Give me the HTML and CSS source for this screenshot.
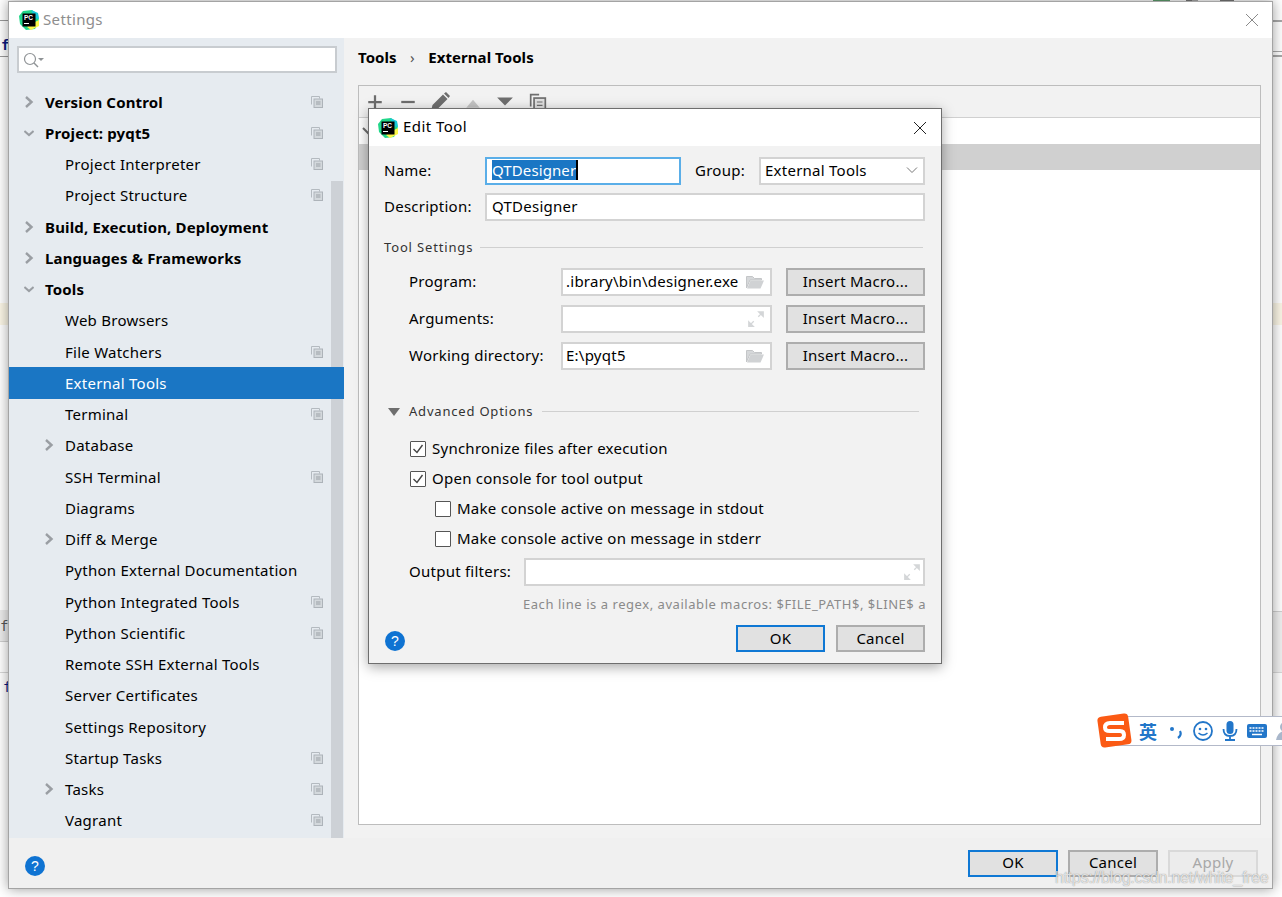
FILE: index.html
```html
<!DOCTYPE html>
<html lang="en">
<head>
<meta charset="utf-8">
<title>Settings</title>
<link rel="stylesheet" href="styles.css">
</head>
<body>
<svg class="defs" width="0" height="0" aria-hidden="true">
  <symbol id="pc" viewBox="0 0 20 20">
    <path d="M4 1 L13 0 L19 4 L20 12 L16 19 L7 20 L1 14 L0 6Z" fill="#21d789"/>
    <path d="M12 0 L19 3 L20 9 L15 8Z" fill="#19c8d8"/>
    <path d="M20 10 L20 16 L12 20 L8 17 L16 12Z" fill="#fcf84a"/>
    <rect x="3.5" y="3.5" width="13" height="13" fill="#000"/>
    <rect x="5" y="13" width="5" height="1" fill="#fff"/>
  </symbol>
  <symbol id="copy" viewBox="0 0 12 12">
    <path d="M.5 8.5V.5h8v2" fill="none" stroke="#b4bac0"/>
    <rect x="3" y="3" width="8.5" height="8.5" fill="#d3d8dc" stroke="#adb3b9"/>
    <path d="M5 6h4.5M5 8h4.5" stroke="#9aa0a6"/>
  </symbol>
  <symbol id="right" viewBox="0 0 10 12">
    <path d="M2 1 L7.500 6 L2 11" fill="none" stroke="#9a9ea3" stroke-width="2.400"/>
  </symbol>
  <symbol id="down" viewBox="0 0 12 12">
    <path d="M.5 3.500 L6 8.500 L11.500 3.500" fill="none" stroke="#9a9ea3" stroke-width="2.400"/>
  </symbol>
  <symbol id="folder" viewBox="0 0 18 14">
    <path d="M.5 13V1.500h6l2 2h7V5H4L.5 13" fill="#d6d8da" stroke="#c4c6c8"/>
    <path d="M1 13.500 L4.500 5.500H18L14.500 13.500Z" fill="#d0d2d4"/>
  </symbol>
  <symbol id="expand" viewBox="0 0 16 16">
    <path d="M9 1h6v6ZM7 15H1V9Z" fill="#d4d6d8"/>
    <path d="M13 3 L10 6M3 13 L6 10" stroke="#d4d6d8" stroke-width="1.200"/>
  </symbol>
  <symbol id="check" viewBox="0 0 14 14">
    <path d="M2.500 7 L6 10.500 L11.500 3" fill="none" stroke="#444" stroke-width="1.400"/>
  </symbol>
</svg>

<div class="bg-strip bg-top"></div>
<div class="bg-strip bg-line-a"></div>
<div class="bg-strip bg-line-b"></div>
<div class="bg-strip bg-yellow"></div>
<div class="bg-strip bg-tab"></div>
<div class="bg-strip bg-line-c"></div>
<div class="bg-strip bg-right-a"></div>
<div class="bg-strip bg-right-b"></div>
<div class="bg-strip bg-right-c"></div>
<div class="bg-strip bg-yellow-r"></div>
<div class="bg-strip bg-tab-r"></div>
<span class="bg-code code-a">f</span>
<span class="bg-code code-b">f</span>
<span class="bg-code code-c">f</span>

<main class="settings">
  <header class="titlebar">
    <svg class="logo" viewBox="0 0 20 20"><use href="#pc"/><text class="pc-text" x="5" y="10">PC</text></svg>
    <span class="win-title">Settings</span>
    <svg class="close close-muted" viewBox="0 0 14 14"><path d="M1 1 L13 13M13 1 L1 13"/></svg>
  </header>
  <div class="split">
    <aside class="sidebar">
      <div class="search">
        <svg class="search-icon" viewBox="0 0 22 16"><circle cx="7" cy="7" r="5.500" fill="none" stroke="#8f9396" stroke-width="1.200"/><path d="M11 11 L15 15" stroke="#8f9396" stroke-width="1.400"/><path d="M15 6h6l-3 3Z" fill="#8f9396"/></svg>
      </div>
      <div class="scroll-thumb"></div>
      <nav class="tree">
        <div class="row top"><svg class="arrow"><use href="#right"/></svg><span>Version Control</span><svg class="copy"><use href="#copy"/></svg></div>
        <div class="row top"><svg class="arrow"><use href="#down"/></svg><span>Project: pyqt5</span><svg class="copy"><use href="#copy"/></svg></div>
        <div class="row"><i class="slot"></i><span>Project Interpreter</span><svg class="copy"><use href="#copy"/></svg></div>
        <div class="row"><i class="slot"></i><span>Project Structure</span><svg class="copy"><use href="#copy"/></svg></div>
        <div class="row top"><svg class="arrow"><use href="#right"/></svg><span>Build, Execution, Deployment</span></div>
        <div class="row top"><svg class="arrow"><use href="#right"/></svg><span>Languages &amp; Frameworks</span></div>
        <div class="row top"><svg class="arrow"><use href="#down"/></svg><span>Tools</span></div>
        <div class="row"><i class="slot"></i><span>Web Browsers</span></div>
        <div class="row"><i class="slot"></i><span>File Watchers</span><svg class="copy"><use href="#copy"/></svg></div>
        <div class="row selected"><i class="slot"></i><span>External Tools</span></div>
        <div class="row"><i class="slot"></i><span>Terminal</span><svg class="copy"><use href="#copy"/></svg></div>
        <div class="row"><svg class="arrow"><use href="#right"/></svg><span>Database</span></div>
        <div class="row"><i class="slot"></i><span>SSH Terminal</span><svg class="copy"><use href="#copy"/></svg></div>
        <div class="row"><i class="slot"></i><span>Diagrams</span></div>
        <div class="row"><svg class="arrow"><use href="#right"/></svg><span>Diff &amp; Merge</span></div>
        <div class="row"><i class="slot"></i><span>Python External Documentation</span></div>
        <div class="row"><i class="slot"></i><span>Python Integrated Tools</span><svg class="copy"><use href="#copy"/></svg></div>
        <div class="row"><i class="slot"></i><span>Python Scientific</span><svg class="copy"><use href="#copy"/></svg></div>
        <div class="row"><i class="slot"></i><span>Remote SSH External Tools</span></div>
        <div class="row"><i class="slot"></i><span>Server Certificates</span></div>
        <div class="row"><i class="slot"></i><span>Settings Repository</span></div>
        <div class="row"><i class="slot"></i><span>Startup Tasks</span><svg class="copy"><use href="#copy"/></svg></div>
        <div class="row"><svg class="arrow"><use href="#right"/></svg><span>Tasks</span><svg class="copy"><use href="#copy"/></svg></div>
        <div class="row"><i class="slot"></i><span>Vagrant</span><svg class="copy"><use href="#copy"/></svg></div>
      </nav>
    </aside>
    <section class="content">
      <div class="crumbs"><b>Tools</b><span class="crumb-sep">›</span><b>External Tools</b></div>
      <div class="panel">
        <div class="toolbar">
          <svg class="tool" viewBox="0 0 16 16"><path d="M8 2v12M2 8h12" stroke="#6e6e6e" stroke-width="2"/></svg>
          <svg class="tool" viewBox="0 0 16 16"><path d="M2 8h12" stroke="#6e6e6e" stroke-width="2"/></svg>
          <svg class="tool tool-pen" viewBox="0 0 20 20"><path d="M1 19 L2.500 13 L13 2.500 L17.500 7 L7 17.500Z M14 1.500 L16 0 L20 4 L18.500 6Z" fill="#6e6e6e"/></svg>
          <svg class="tool" viewBox="0 0 16 16"><path d="M2 13h12L8 6Z" fill="#c4c4c4"/></svg>
          <svg class="tool" viewBox="0 0 16 16"><path d="M1 4h14L8 11Z" fill="#6e6e6e"/></svg>
          <svg class="tool" viewBox="0 0 16 16"><path d="M1.500 12V1.500H9" fill="none" stroke="#6e6e6e" stroke-width="1.500"/><rect x="4.500" y="4.500" width="10" height="11" fill="#e0e0e0" stroke="#6e6e6e" stroke-width="1.500"/><path d="M7 8h5M7 11h5" stroke="#6e6e6e"/></svg>
        </div>
        <div class="list">
          <div class="list-group"><svg class="list-arrow" viewBox="0 0 12 10"><path d="M1 2 L6 7 L11 2" fill="none" stroke="#6e6e6e" stroke-width="2"/></svg></div>
          <div class="list-selected"></div>
        </div>
      </div>
    </section>
  </div>
  <footer class="footer">
    <svg class="help" viewBox="0 0 20 20"><circle cx="10" cy="10" r="10"/><text x="10" y="15">?</text></svg>
    <div class="actions">
      <span class="btn btn-default">OK</span>
      <span class="btn">Cancel</span>
      <span class="btn btn-disabled">Apply</span>
    </div>
  </footer>
</main>

<div class="watermark">https://blog.csdn.net/white_free</div>

<div class="ime">
  <svg class="ime-logo" viewBox="0 0 36 36"><rect x="2" y="2" width="31" height="31" rx="4" transform="rotate(-8 18 18)" fill="#fb5a14"/><path d="M27 10 H13 Q8 10 8 14.500 Q8 18 13 18 H23 Q27 18 27 22 Q27 26 22 26 H9" fill="none" stroke="#fff" stroke-width="4"/></svg>
  <span class="ime-zh">英</span>
  <svg class="ime-punct" viewBox="0 0 16 16"><circle cx="4" cy="6" r="2" fill="#2276c9"/><path d="M12 8q2 4-2 7" fill="none" stroke="#2276c9" stroke-width="2.200"/></svg>
  <svg class="ime-icon ime-smile" viewBox="0 0 20 20"><circle cx="10" cy="10" r="9" fill="none" stroke="#2276c9" stroke-width="1.800"/><circle cx="7" cy="8" r="1.300" fill="#2276c9"/><circle cx="13" cy="8" r="1.300" fill="#2276c9"/><path d="M5.500 12q4.500 4 9 0" fill="none" stroke="#2276c9" stroke-width="1.500"/></svg>
  <svg class="ime-icon" viewBox="0 0 20 20"><rect x="6.500" y="0" width="7" height="13" rx="3.500" fill="#2276c9"/><path d="M3.500 8q0 7 6.500 7t6.500-7M10 15v3M5 19h10" fill="none" stroke="#2276c9" stroke-width="1.800"/></svg>
  <svg class="ime-icon" viewBox="0 0 20 16"><rect x="0" y="1" width="20" height="14" rx="2" fill="#2276c9"/><path d="M2.500 5h15M2.500 8h15" stroke="#fff" stroke-width="1.500" stroke-dasharray="2 1"/><path d="M5 11.500h10" stroke="#fff" stroke-width="1.500"/></svg>
  <svg class="ime-icon ime-person" viewBox="0 0 20 20"><circle cx="10" cy="6" r="5" fill="#a9b7cb"/><path d="M1 19q2-9 9-9t9 9Z" fill="#a9b7cb"/></svg>
</div>

<div class="dialog">
  <header class="dlg-title">
    <svg class="logo dlg-logo" viewBox="0 0 20 20"><use href="#pc"/><text class="pc-text" x="5" y="10">PC</text></svg>
    <span class="dlg-name">Edit Tool</span>
    <svg class="close" viewBox="0 0 14 14"><path d="M1 1 L13 13M13 1 L1 13"/></svg>
  </header>
  <div class="dlg-body">
    <div class="f-row f-name">
      <label class="lbl lbl-name">Name:</label>
      <div class="input input-focus"><span class="selection">QTDesigner</span><i class="caret"></i></div>
      <label class="lbl lbl-group">Group:</label>
      <div class="input select"><span>External Tools</span><svg class="select-arrow" viewBox="0 0 12 8"><path d="M1 1.500 L6 6.500 L11 1.500" fill="none" stroke="#777"/></svg></div>
    </div>
    <div class="f-row f-desc">
      <label class="lbl lbl-name">Description:</label>
      <div class="input grow"><span>QTDesigner</span></div>
    </div>
    <div class="sep sep-tool"><span>Tool Settings</span><i></i></div>
    <div class="macro-row">
      <label class="lbl lbl-macro">Program:</label>
      <div class="input input-macro"><span class="clip">.ibrary\bin\designer.exe</span><svg class="field-icon" viewBox="0 0 18 14"><use href="#folder"/></svg></div>
      <span class="btn btn-macro">Insert Macro...</span>
    </div>
    <div class="macro-row">
      <label class="lbl lbl-macro">Arguments:</label>
      <div class="input input-macro"><span class="clip"></span><svg class="field-icon field-exp" viewBox="0 0 16 16"><use href="#expand"/></svg></div>
      <span class="btn btn-macro">Insert Macro...</span>
    </div>
    <div class="macro-row">
      <label class="lbl lbl-macro">Working directory:</label>
      <div class="input input-macro"><span class="clip">E:\pyqt5</span><svg class="field-icon" viewBox="0 0 18 14"><use href="#folder"/></svg></div>
      <span class="btn btn-macro">Insert Macro...</span>
    </div>
    <div class="sep sep-adv"><svg class="adv-arrow" viewBox="0 0 12 8"><path d="M0 0h12L6 8Z" fill="#6e6e6e"/></svg><span>Advanced Options</span><i></i></div>
    <div class="cb-row"><span class="cb"><svg viewBox="0 0 14 14"><use href="#check"/></svg></span><span>Synchronize files after execution</span></div>
    <div class="cb-row"><span class="cb"><svg viewBox="0 0 14 14"><use href="#check"/></svg></span><span>Open console for tool output</span></div>
    <div class="cb-row cb-sub"><span class="cb"></span><span>Make console active on message in stdout</span></div>
    <div class="cb-row cb-sub"><span class="cb"></span><span>Make console active on message in stderr</span></div>
    <div class="f-row f-out">
      <label class="lbl lbl-out">Output filters:</label>
      <div class="input grow"><svg class="field-icon field-exp end" viewBox="0 0 16 16"><use href="#expand"/></svg></div>
    </div>
    <div class="hint">Each line is a regex, available macros: $FILE_PATH$, $LINE$ a</div>
    <div class="dlg-foot">
      <svg class="help dlg-help" viewBox="0 0 20 20"><circle cx="10" cy="10" r="10"/><text x="10" y="15">?</text></svg>
      <span class="btn btn-default dlg-btn">OK</span>
      <span class="btn dlg-btn">Cancel</span>
    </div>
  </div>
</div>
</body>
</html>
```

FILE: styles.css
```css
* { box-sizing: border-box; }
html, body { margin: 0; height: 100%; }
body {
  position: relative;
  width: 1282px;
  height: 897px;
  overflow: hidden;
  background: #fff;
  font-family: "Noto Sans", "Liberation Sans", sans-serif;
  font-size: 15px;
  letter-spacing: .25px;
  color: #000;
}
.defs { position: absolute; }

/* things visible behind the windows */
.bg-strip { position: absolute; }
.bg-top {
  left: 1040px;
  top: 0;
  width: 200px;
  height: 1px;
  background: linear-gradient(90deg, transparent 0 113px, #5fa06f 113px 130px, transparent 130px 146px, #777 146px 152px, #aaa 152px 158px, transparent 158px 180px, #777 180px 194px, transparent 194px);
}
.bg-line-a { left: 0; top: 20px; width: 9px; height: 1px; background: #9a9a9a; }
.bg-line-b { left: 0; top: 56px; width: 9px; height: 1px; background: #9a9a9a; }
.bg-yellow { left: 0; top: 303px; width: 9px; height: 22px; background: #fbf6e6; }
.bg-tab { left: 0; top: 610px; width: 9px; height: 32px; background: #ececec; border-bottom: 1px solid #cfcfcf; }
.bg-line-c { left: 0; top: 672px; width: 9px; height: 1px; background: #d8d8d8; }
.bg-right-a { left: 1273px; top: 20px; width: 9px; height: 2px; background: #a8a8a8; }
.bg-right-b { left: 1273px; top: 51px; width: 9px; height: 1px; background: #a8a8a8; }
.bg-right-c { left: 1273px; top: 55px; width: 9px; height: 2px; background: #a8a8a8; }
.bg-yellow-r { left: 1273px; top: 303px; width: 9px; height: 22px; background: #fbf6e6; }
.bg-tab-r { left: 1273px; top: 611px; width: 9px; height: 62px; background: #f0f0f0; border-top: 1px solid #d0d0d0; border-bottom: 1px solid #d8d8d8; }
.bg-code { position: absolute; left: 1px; font-family: "DejaVu Sans Mono", monospace; font-size: 14px; line-height: 16px; letter-spacing: 0; }
.code-a { top: 37px; left: 1px; color: #0a1a80; font-weight: 700; }
.code-b { top: 618px; left: 0; color: #555; }
.code-c { top: 679px; left: 3px; color: #0a1a80; }

/* settings window */
.settings {
  position: absolute;
  left: 8px;
  top: 1px;
  width: 1265px;
  height: 888px;
  display: flex;
  flex-direction: column;
  background: #f2f2f2;
  border: 1px solid #a4a4a4;
  box-shadow: 0 0 12px rgba(0, 0, 0, .4);
}
.titlebar {
  flex: none;
  height: 36px;
  display: flex;
  align-items: center;
  padding: 0 13px 0 10px;
  background: #fff;
}
.logo { width: 20px; height: 20px; flex: none; }
.pc-text { font: 700 6.500px "Liberation Sans", sans-serif; letter-spacing: 0; fill: #fff; }
.win-title { margin-left: 4px; padding-bottom: 2px; color: #8e8e8e; letter-spacing: .35px; }
.close { width: 14px; height: 14px; margin-left: auto; }
.close path { fill: none; stroke: #222; stroke-width: 1; }
.close-muted path { stroke: #8a8a8a; }

.split { flex: 1; display: flex; min-height: 0; }
.sidebar {
  position: relative;
  flex: none;
  width: 335px;
  background: #e6ebf0;
  padding: 8px 0 0;
}
.search {
  height: 27px;
  margin: 0 7px 0 8px;
  background: #fff;
  border: 2px solid #c8ccd0;
  display: flex;
  align-items: center;
  padding-left: 4px;
}
.search-icon { width: 22px; height: 16px; }
.scroll-thumb {
  position: absolute;
  right: 1px;
  top: 143px;
  bottom: 0;
  width: 12px;
  background: #cdd1d6;
}
.tree { margin-top: 13px; }
.row {
  position: relative;
  height: 31.25px;
  display: flex;
  align-items: center;
  padding-left: 34px;
  white-space: nowrap;
}
.row.top { padding-left: 14px; font-weight: 700; letter-spacing: .15px; }
.slot { width: 22px; flex: none; }
.arrow { width: 10px; height: 12px; flex: none; margin-left: 1px; margin-right: 11px; }
.copy { width: 12px; height: 12px; margin-left: auto; margin-right: 21px; flex: none; }
.selected { background: #1a76c4; color: #fff; z-index: 1; }

.content { flex: 1; min-width: 0; padding: 0 11px 13px 14px; display: flex; flex-direction: column; }
.crumbs { height: 47px; flex: none; display: flex; align-items: center; padding-bottom: 9px; letter-spacing: .05px; }
.crumbs b { font-weight: 700; }
.crumb-sep { margin: 0 13.500px; color: #555; }
.panel { flex: 1; display: flex; flex-direction: column; border: 1px solid #bdbdbd; }
.toolbar {
  height: 32px;
  flex: none;
  display: flex;
  align-items: center;
  gap: 14.600px;
  padding: 0 7px;
  border-bottom: 1px solid #d0d0d0;
  background: #f2f2f2;
}
.tool { width: 18px; height: 18px; flex: none; }
.tool-pen { width: 20px; height: 20px; margin: 0 -1px; }
.list { flex: 1; background: #fff; }
.list-group { height: 26px; padding: 8px 0 0 3px; }
.list-arrow { display: block; width: 12px; height: 10px; }
.list-selected { height: 26px; background: #d0d0d0; }

.footer {
  flex: none;
  height: 50px;
  display: flex;
  align-items: center;
  justify-content: space-between;
  padding: 0 14px 0 16px;
  background: #f0f0f0;
}
.help { width: 20px; height: 20px; flex: none; margin-top: 6px; }
.help circle { fill: #0f73d2; }
.help text { font: 14px "Liberation Sans", sans-serif; letter-spacing: 0; fill: #fff; text-anchor: middle; }
.actions { display: flex; gap: 10px; }
.btn {
  width: 90px;
  height: 27px;
  padding-bottom: 2px;
  display: flex;
  align-items: center;
  justify-content: center;
  background: #e1e1e1;
  border: 2px solid #adadad;
  white-space: nowrap;
}
.btn-default { border-color: #0f78d4; }
.btn-disabled { border-color: #d9d9d9; background: #ececec; color: #a8a8a8; }

.watermark {
  position: absolute;
  left: 1055px;
  top: 868px;
  font-family: "Liberation Sans", sans-serif;
  font-size: 16px;
  letter-spacing: -.25px;
  line-height: 20px;
  color: rgba(255, 255, 255, .75);
  text-shadow: 0 0 1px rgba(90, 90, 90, .8);
}

.ime {
  position: absolute;
  left: 1097px;
  top: 713px;
  width: 185px;
  height: 36px;
  display: flex;
  align-items: center;
}
.ime::before {
  content: "";
  position: absolute;
  left: 15px;
  right: 0;
  top: 3px;
  bottom: 3px;
  background: #fff;
  border: 1px solid #b3b9c9;
  border-right: 0;
}
.ime > * { position: relative; flex: none; }
.ime-logo { width: 36px; height: 36px; }
.ime-zh {
  margin-left: 6px;
  color: #2276c9;
  font-family: "Noto Sans CJK SC", sans-serif;
  font-size: 18px;
  font-weight: 700;
  line-height: 20px;
  letter-spacing: 0;
}
.ime-punct { width: 16px; height: 16px; margin-left: 11px; }
.ime-icon { width: 20px; height: 20px; margin-left: 7px; }
.ime-smile { margin-left: 9px; }
.ime-person { margin-left: 8px; }

/* dialog */
.dialog {
  position: absolute;
  left: 368px;
  top: 108px;
  width: 574px;
  height: 556px;
  display: flex;
  flex-direction: column;
  border: 1px solid #6e6e6e;
  background: #f2f2f2;
  box-shadow: 0 3px 12px rgba(0, 0, 0, .35);
}
.dlg-title {
  flex: none;
  height: 37px;
  display: flex;
  align-items: center;
  padding: 0 14px 0 9px;
  background: #fff;
}
.dlg-name { margin-left: 5px; padding-bottom: 3px; letter-spacing: .45px; }
.dlg-body { flex: 1; padding: 11px 16px 0 15px; }
.f-row { display: flex; align-items: center; }
.f-name { height: 28px; }
.f-desc { height: 28px; margin-top: 8px; }
.lbl { white-space: nowrap; flex: none; padding-bottom: 2px; }
.lbl-name { width: 101px; }
.lbl-group { margin: 0 14px; width: 50px; }
.input {
  height: 100%;
  display: flex;
  align-items: center;
  background: #fff;
  border: 2px solid #d3d3d3;
  padding: 0 0 2px 5px;
  min-width: 0;
}
.input-focus { width: 196px; border-color: #5aaee8; }
.selection { background: #1a76c4; color: #fff; height: 20px; line-height: 20px; padding: 0 1px 0 0; letter-spacing: .1px; }
.caret { width: 2px; height: 20px; background: #000; margin-left: -1px; }
.select { flex: 1; justify-content: space-between; padding-left: 4px; padding-right: 5px; }
.select-arrow { width: 12px; height: 8px; }
.grow { flex: 1; }
.sep { display: flex; align-items: center; font-size: 13px; letter-spacing: .85px; color: #333; }
.sep i { flex: 1; height: 1px; margin-bottom: 2px; background: #d0d0d0; }
.sep span { margin-right: 7px; padding-bottom: 2px; }
.sep-tool { height: 20px; margin-top: 17px; padding-right: 2px; }
.macro-row { display: flex; align-items: center; height: 28px; margin-top: 9px; }
.sep-tool + .macro-row { margin-top: 10px; }
.lbl-macro { width: 177px; padding-left: 25px; }
.input-macro { width: 211px; height: 28px; padding: 0 6px 2px 3px; justify-content: space-between; }
.clip { white-space: nowrap; overflow: hidden; }
.field-icon { width: 18px; height: 16px; flex: none; margin-top: 2px; }
.field-exp { height: 18px; margin-right: -1px; }
.field-icon.end { margin-left: auto; margin-right: 2px; }
.btn-macro { width: 139px; margin-left: 14px; height: 28px; }
.sep-adv { height: 20px; margin-top: 32px; padding: 0 6px 0 4px; letter-spacing: .8px; }
.adv-arrow { width: 12px; height: 8px; margin-right: 9px; }
.sep-adv span { margin-right: 9px; }
.cb-row { display: flex; align-items: center; height: 30px; padding-left: 26px; white-space: nowrap; }
.cb-row > span:last-child { padding-bottom: 2px; }
.sep-adv + .cb-row { margin-top: 12px; }
.cb-sub { padding-left: 51px; }
.cb {
  width: 16px;
  height: 16px;
  flex: none;
  margin-right: 6px;
  border: 1px solid #555;
  background: #fff;
  border-radius: 1px;
}
.cb svg { display: block; width: 14px; height: 14px; }
.f-out { height: 28px; margin-top: 4px; padding-left: 25px; }
.lbl-out { width: 115px; }
.hint { margin-top: 8px; height: 20px; padding-left: 139px; font-size: 13px; letter-spacing: .55px; color: #8a8a8a; white-space: nowrap; line-height: 20px; }
.dlg-foot { display: flex; align-items: center; gap: 11px; justify-content: flex-end; margin-top: 11px; }
.dlg-help { margin-right: auto; margin-left: 1px; margin-top: 4px; }
.dlg-btn { width: 89px; height: 27px; }
```
